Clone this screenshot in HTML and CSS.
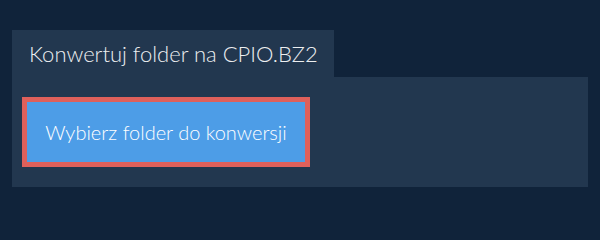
FILE: index.html
```html
<!DOCTYPE html>
<html lang="pl">
<head>
<meta charset="utf-8">
<link rel="stylesheet" href="styles.css">
</head>
<body>
<div class="converter">
  <div class="tab">Konwertuj folder na CPIO.BZ2</div>
  <div class="panel">
    <button class="pick">Wybierz folder do konwersji</button>
  </div>
</div>
</body>
</html>
```
FILE: styles.css
```css
html, body {
  margin: 0;
  padding: 0;
  background: #10233a;
}
body {
  padding: 30px 12px 0 12px;
  font-family: Lato, "Noto Sans", sans-serif;
}
.converter {
  display: flex;
  flex-direction: column;
  align-items: flex-start;
}
.tab {
  background: #22374f;
  color: #eceef0;
  font-size: 22px;
  font-weight: 300;
  height: 47px;
  box-sizing: border-box;
  width: 322px;
  padding-left: 17px;
  display: flex;
  align-items: center;
  white-space: nowrap;
}
.panel {
  background: #22374f;
  align-self: stretch;
  height: 110px;
  box-sizing: border-box;
  padding: 20px 10px;
}
.pick {
  width: 288px;
  height: 70px;
  box-sizing: border-box;
  border: 5px solid #df605b;
  background: #4d9de7;
  color: #ffffff;
  font-family: Lato, "Noto Sans", sans-serif;
  font-size: 20px;
  font-weight: 300;
  padding: 0;
  margin: 0;
  display: flex;
  align-items: center;
  justify-content: center;
}
```
